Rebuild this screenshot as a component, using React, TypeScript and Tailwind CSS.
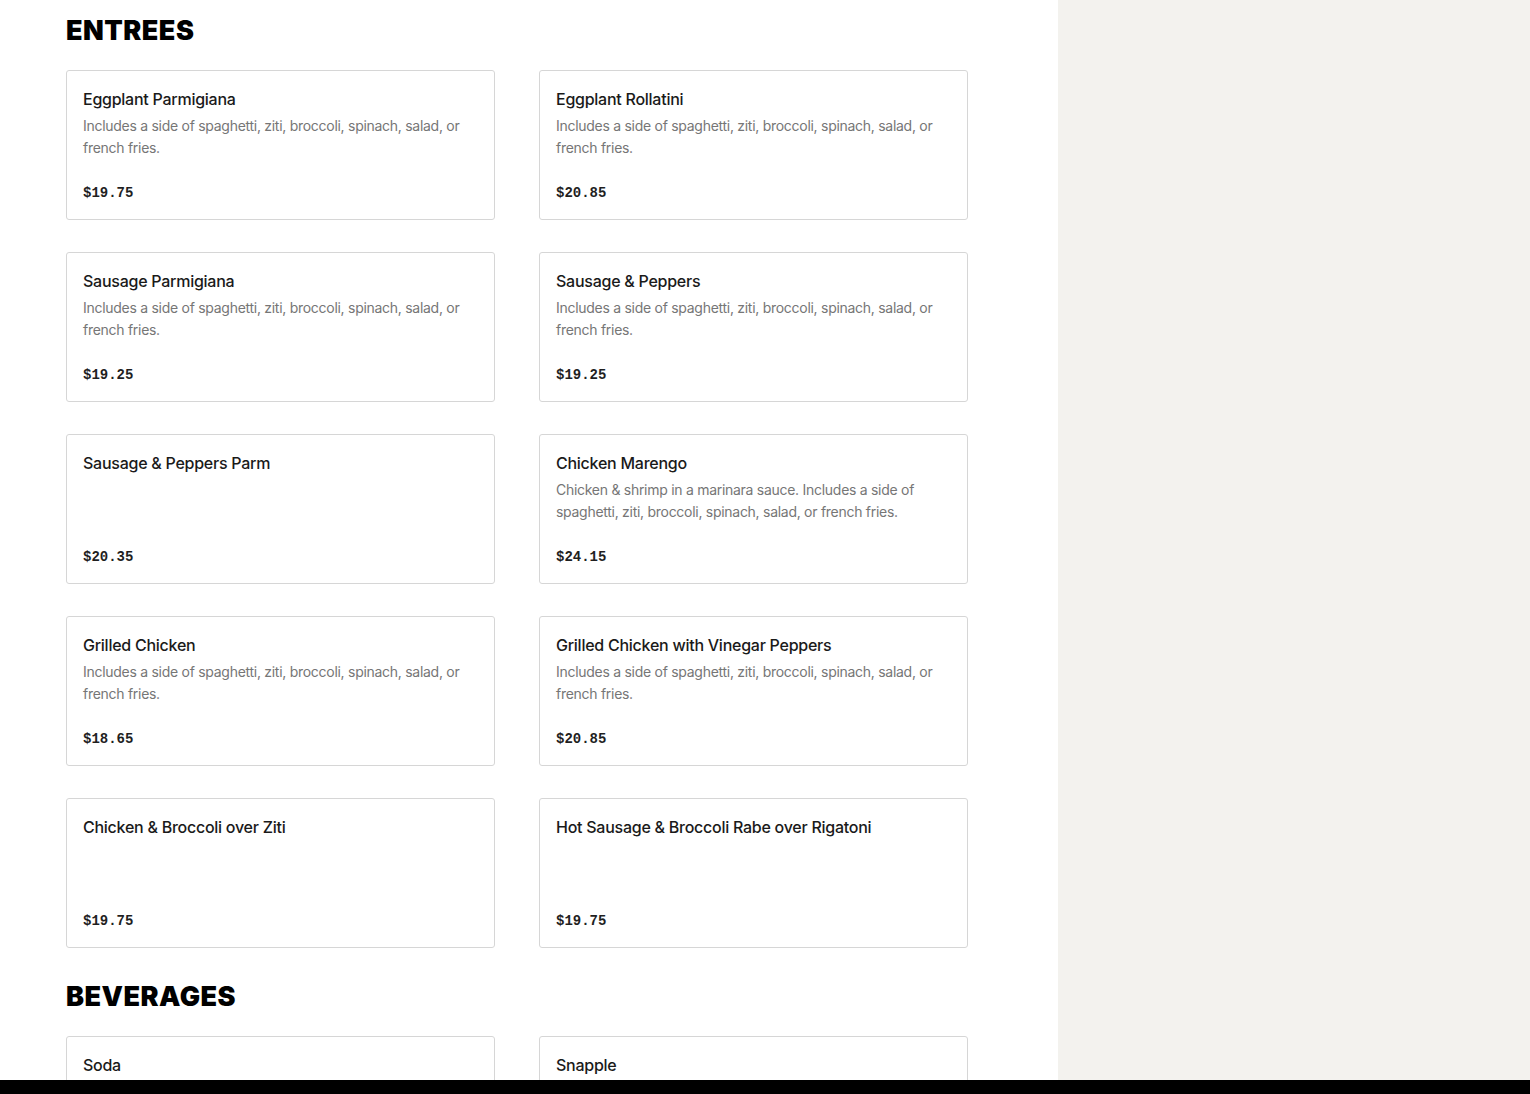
import React from "react";

type Item = { name: string; desc?: string; price: string };

const SIDE = "Includes a side of spaghetti, ziti, broccoli, spinach, salad, or french fries.";

const entrees: Item[] = [
  { name: "Eggplant Parmigiana", desc: SIDE, price: "$19.75" },
  { name: "Eggplant Rollatini", desc: SIDE, price: "$20.85" },
  { name: "Sausage Parmigiana", desc: SIDE, price: "$19.25" },
  { name: "Sausage & Peppers", desc: SIDE, price: "$19.25" },
  { name: "Sausage & Peppers Parm", price: "$20.35" },
  {
    name: "Chicken Marengo",
    desc: "Chicken & shrimp in a marinara sauce. Includes a side of spaghetti, ziti, broccoli, spinach, salad, or french fries.",
    price: "$24.15",
  },
  { name: "Grilled Chicken", desc: SIDE, price: "$18.65" },
  { name: "Grilled Chicken with Vinegar Peppers", desc: SIDE, price: "$20.85" },
  { name: "Chicken & Broccoli over Ziti", price: "$19.75" },
  { name: "Hot Sausage & Broccoli Rabe over Rigatoni", price: "$19.75" },
];

const beverages: Item[] = [
  { name: "Soda", price: "$2.50" },
  { name: "Snapple", price: "$3.25" },
];

function Card({ item }: { item: Item }) {
  return (
    <div className="flex h-[150px] flex-col rounded-[3px] border border-[#d6d6d6] bg-white px-4 pt-4 pb-4">
      <div className="text-[16px] leading-6 font-medium tracking-[-0.016em] text-[#1a1a1a]">{item.name}</div>
      {item.desc && (
        <div className="mt-1 text-[14px] leading-[22px] tracking-[-0.02em] text-[#767676]">{item.desc}</div>
      )}
      <div
        className="mt-auto text-[14px] leading-5 font-bold text-[#1f1f1f]"
        style={{ fontFamily: '"Liberation Mono", "DejaVu Sans Mono", monospace' }}
      >
        {item.price}
      </div>
    </div>
  );
}

function Section({ title, items, className }: { title: string; items: Item[]; className?: string }) {
  return (
    <section className={className}>
      <h2 className="mb-[23px] text-[27px] leading-8 font-black tracking-[0.018em] text-black">{title}</h2>
      <div className="grid grid-cols-[429px_429px] gap-x-[44px] gap-y-8">
        {items.map((it) => (
          <Card key={it.name} item={it} />
        ))}
      </div>
    </section>
  );
}

export default function App() {
  return (
    <div
      className="flex h-[1094px] w-[1530px] flex-col overflow-hidden"
      style={{ fontFamily: 'Inter, "Noto Sans", sans-serif' }}
    >
      <div className="flex h-[1080px] overflow-hidden">
        <div className="w-[1058px] shrink-0 bg-white pl-[66px] pt-[15px]">
          <Section title="ENTREES" items={entrees} />
          <Section title="BEVERAGES" items={beverages} className="mt-[33px]" />
        </div>
        <div className="flex-1 bg-[#f3f2ee]" />
      </div>
      <div className="h-[14px] bg-black" />
    </div>
  );
}
